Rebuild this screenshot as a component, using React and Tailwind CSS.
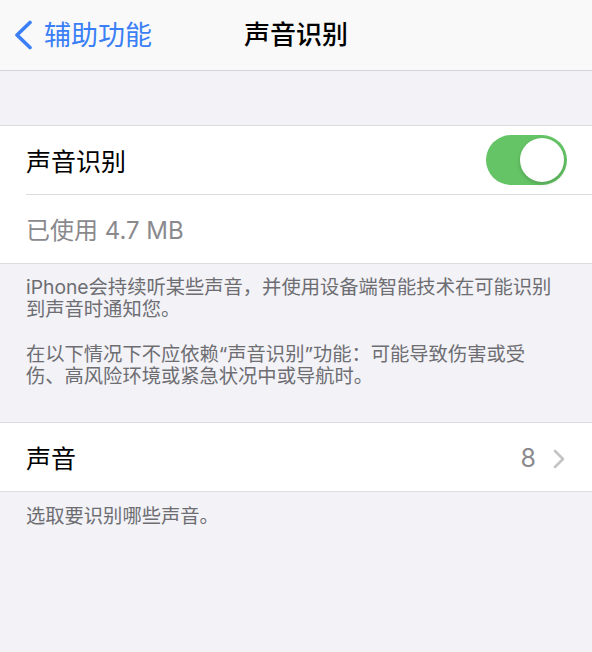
import React from "react";

const font = { fontFamily: 'Inter, "Noto Sans CJK SC", sans-serif' };

function Chevron() {
  return (
    <svg width="12" height="20" viewBox="0 0 12 20" fill="none">
      <path d="M2 2 L10 10 L2 18" stroke="#c4c4c7" strokeWidth="2.6" strokeLinecap="round" strokeLinejoin="round" />
    </svg>
  );
}

export default function App() {
  return (
    <div className="w-[592px] h-[652px] bg-[#f2f2f7] flex flex-col overflow-hidden" style={font}>
      {/* Nav bar */}
      <div className="h-[71px] shrink-0 bg-[#f9f9f9] border-b border-[#d4d4d8] grid grid-cols-[1fr_auto_1fr] items-center">
        <div className="flex items-center pl-[13px]">
          <svg width="20" height="30" viewBox="0 0 20 30" fill="none">
            <path d="M17 2.5 L4 15 L17 27.5" stroke="#3a7ff6" strokeWidth="3.6" strokeLinecap="round" strokeLinejoin="round" />
          </svg>
          <span className="ml-[11px] text-[27px] leading-none text-[#3a7ff6]">辅助功能</span>
        </div>
        <div className="text-[26px] leading-none font-medium text-black">声音识别</div>
        <div />
      </div>

      {/* Gap */}
      <div className="h-[55px] shrink-0 border-b border-[#dcdce0]" />

      {/* Group 1 */}
      <div className="bg-white shrink-0 border-b border-[#dcdce0]">
        <div className="h-[69px] pl-[26px] flex">
          <div className="flex-1 flex items-center justify-between pr-[25px] border-b border-[#dcdce0]">
            <span className="mt-[5px] text-[25px] text-black">声音识别</span>
            <div className="w-[81px] h-[50px] rounded-full bg-[#65c466] flex items-center justify-end pr-[3px]">
              <div className="w-[44px] h-[44px] rounded-full bg-white shadow-[0_2px_4px_rgba(0,0,0,0.18)]" />
            </div>
          </div>
        </div>
        <div className="h-[68px] pl-[26px] flex items-center">
          <span className="mt-[4px] text-[24px] text-[#8a8a8e]">已使用 4.7 MB</span>
        </div>
      </div>

      {/* Footer 1 */}
      <div className="h-[159px] shrink-0 pl-[26px] pt-[12px] border-b border-[#dcdce0] text-[19.3px] leading-[22px] text-[#6d6d72]">
        <p className="whitespace-nowrap">iPhone会持续听某些声音，并使用设备端智能技术在可能识别<br />到声音时通知您。</p>
        <p className="whitespace-nowrap mt-[23px]">在以下情况下不应依赖“声音识别”功能：可能导致伤害或受<br />伤、高风险环境或紧急状况中或导航时。</p>
      </div>

      {/* Group 2 */}
      <div className="bg-white shrink-0 h-[69px] border-b border-[#dcdce0] pl-[26px] pr-[27px] flex items-center justify-between">
        <span className="mt-[5px] text-[25px] text-black">声音</span>
        <div className="mt-[3px] flex items-center gap-[17px]">
          <span className="text-[25px] text-[#8a8a8e]">8</span>
          <Chevron />
        </div>
      </div>

      {/* Footer 2 */}
      <div className="pl-[26px] pt-[13px] text-[19.3px] leading-[22px] text-[#6d6d72]">
        选取要识别哪些声音。
      </div>
    </div>
  );
}
